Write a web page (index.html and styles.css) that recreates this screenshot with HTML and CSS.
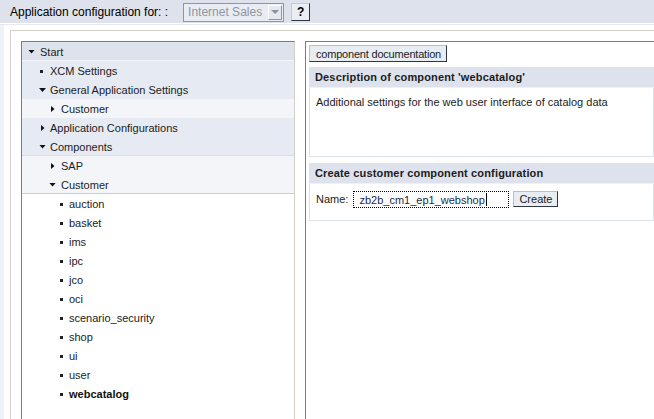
FILE: index.html
```html
<!DOCTYPE html>
<html>
<head>
<meta charset="utf-8">
<link rel="stylesheet" href="styles.css">
</head>
<body>
<div class="topbar">
  <span class="toplabel">Application configuration for: :</span>
  <div class="select">
    <span class="select-text">Internet Sales</span>
    <span class="select-arrow"><i class="arrow-gray"></i></span>
  </div>
  <span class="helpbtn">?</span>
</div>
<div class="topsep"></div>
<div class="workarea">
  <div class="frame">
    <div class="tree">
      <div class="row r0 sep-light"><span class="mk l0"><i class="tri-down"></i></span>Start</div>
      <div class="row r1"><span class="mk l1"><i class="dot"></i></span>XCM Settings</div>
      <div class="row r1"><span class="mk l1"><i class="tri-down"></i></span>General Application Settings</div>
      <div class="row r2"><span class="mk l2"><i class="tri-right"></i></span>Customer</div>
      <div class="row r1"><span class="mk l1"><i class="tri-right"></i></span>Application Configurations</div>
      <div class="row r1 sep-mid"><span class="mk l1"><i class="tri-down"></i></span>Components</div>
      <div class="row r2"><span class="mk l2"><i class="tri-right"></i></span>SAP</div>
      <div class="row r2 sep-dark"><span class="mk l2"><i class="tri-down"></i></span>Customer</div>
      <div class="row leaf"><span class="mk l3"><i class="dot"></i></span>auction</div>
      <div class="row leaf"><span class="mk l3"><i class="dot"></i></span>basket</div>
      <div class="row leaf"><span class="mk l3"><i class="dot"></i></span>ims</div>
      <div class="row leaf"><span class="mk l3"><i class="dot"></i></span>ipc</div>
      <div class="row leaf"><span class="mk l3"><i class="dot"></i></span>jco</div>
      <div class="row leaf"><span class="mk l3"><i class="dot"></i></span>oci</div>
      <div class="row leaf"><span class="mk l3"><i class="dot"></i></span>scenario_security</div>
      <div class="row leaf"><span class="mk l3"><i class="dot"></i></span>shop</div>
      <div class="row leaf"><span class="mk l3"><i class="dot"></i></span>ui</div>
      <div class="row leaf"><span class="mk l3"><i class="dot"></i></span>user</div>
      <div class="row leaf selected"><span class="mk l3"><i class="dot"></i></span>webcatalog</div>
    </div>
    <div class="detail">
      <div class="btnrow"><span class="btn doc">component documentation</span></div>
      <div class="section">
        <div class="sec-head">Description of component 'webcatalog'</div>
        <div class="sec-body desc">Additional settings for the web user interface of catalog data</div>
      </div>
      <div class="section">
        <div class="sec-head">Create customer component configuration</div>
        <div class="sec-body form">
          <span class="label">Name:</span>
          <div class="input"><span class="input-inner">zb2b_cm1_ep1_webshop<span class="caret"></span></span></div>
          <span class="btn create">Create</span>
        </div>
      </div>
    </div>
  </div>
</div>
</body>
</html>
```

FILE: styles.css
```css
html, body {
  margin: 0;
  padding: 0;
  background: #ffffff;
}
body {
  font-family: "Liberation Sans", Arial, sans-serif;
  font-size: 11px;
  color: #1c1c1c;
  height: 100vh;
  overflow: hidden;
  display: flex;
  flex-direction: column;
}
.topbar {
  height: 23px;
  flex: none;
  background: #dde2ec;
  display: flex;
  align-items: center;
  padding-left: 10px;
  box-sizing: border-box;
}
.toplabel {
  font-size: 12px;
  color: #000;
  margin-right: 15px;
}
.select {
  width: 101px;
  height: 19px;
  box-sizing: border-box;
  border: 1px solid #8f96a2;
  background: #e9edf3;
  display: flex;
  align-items: center;
  justify-content: space-between;
  padding: 0 1px 0 4px;
  margin-top: 1px;
}
.select-text {
  font-size: 12px;
  color: #8e95a3;
}
.select-arrow {
  width: 14px;
  height: 15px;
  box-sizing: border-box;
  background: #e4e8ef;
  border-top: 1px solid #ffffff;
  border-left: 1px solid #ffffff;
  border-right: 1px solid #8f96a2;
  border-bottom: 1px solid #8f96a2;
  display: flex;
  align-items: center;
  justify-content: center;
}
.arrow-gray {
  width: 8px;
  height: 4px;
  background: #8d929c;
  clip-path: polygon(0 0, 100% 0, 50% 100%);
}
.helpbtn {
  margin-left: 7px;
  width: 19px;
  height: 18px;
  box-sizing: border-box;
  border: 1px solid #c4cad4;
  border-right-color: #2e3440;
  border-bottom-color: #2e3440;
  background: #e9edf4;
  font-size: 12px;
  font-weight: bold;
  color: #000;
  display: flex;
  align-items: center;
  justify-content: center;
  margin-top: 1px;
}
.topsep {
  height: 1px;
  flex: none;
  margin-top: 1px;
  background: #e6eaf0;
}
.workarea {
  flex: 1;
  min-height: 0;
  border-left: 4px solid #eef1f7;
  padding: 5px 0 0 6px;
  display: flex;
}
.frame {
  flex: 1;
  border-left: 1px solid #d6d2c9;
  border-top: 1px solid #d6d2c9;
  padding: 10px 0 0 10px;
  display: flex;
  gap: 10px;
}
.tree {
  width: 274px;
  flex: none;
  box-sizing: border-box;
  border-left: 1px solid #7c7c7c;
  border-top: 1px solid #7c7c7c;
  border-right: 1px solid #d4d0c8;
}
.row {
  height: 19px;
  box-sizing: border-box;
  padding-top: 1px;
  display: flex;
  align-items: center;
  white-space: nowrap;
  color: #1c1c1c;
}
.r0 { background: #dde2ec; }
.r1 { background: #e6eaf2; }
.r2 { background: #f3f5f9; }
.leaf { background: #ffffff; }
.sep-light { border-bottom: 1px solid #f3f5f9; }
.sep-mid { border-bottom: 1px solid #d9dee7; }
.sep-dark { border-bottom: 1px solid #c9ced7; }
.selected { font-weight: bold; color: #111; }
.mk {
  display: inline-flex;
  align-items: center;
  justify-content: center;
  width: 7px;
  height: 7px;
  flex: none;
  margin-right: 5px;
}
.l0 { margin-left: 6px; }
.l1 { margin-left: 17px; margin-right: 4px; }
.l2 { margin-left: 27px; }
.l3 { margin-left: 38px; width: 3px; margin-right: 6px; }
.l1 .dot { margin-left: -2px; }
.tri-down {
  width: 7px;
  height: 4px;
  background: #111;
  clip-path: polygon(0 0, 100% 0, 50% 100%);
}
.tri-right {
  width: 4px;
  height: 7px;
  background: #111;
  clip-path: polygon(0 0, 100% 50%, 0 100%);
}
.dot {
  width: 3px;
  height: 3px;
  background: #222;
}
.detail {
  flex: 1;
  box-sizing: border-box;
  border-left: 1px solid #7c7c7c;
  border-top: 1px solid #7c7c7c;
  padding: 3px 0 0 3px;
  min-width: 0;
}
.btnrow {
  display: flex;
  margin-bottom: 5px;
}
.btn {
  height: 17px;
  box-sizing: border-box;
  padding: 0 5px 0 6px;
  background: #e8ecf3;
  border: 1px solid #b8bfca;
  border-right-color: #2f3542;
  border-bottom-color: #2f3542;
  color: #1c1c1c;
  display: inline-flex;
  align-items: center;
}
.doc {
  letter-spacing: -0.2px;
}
.section {
  margin-bottom: 6px;
}
.sec-head {
  height: 21px;
  background: #dde2ec;
  font-weight: bold;
  line-height: 20px;
  padding-left: 6px;
  color: #1c1c1c;
  letter-spacing: 0.15px;
  border-bottom: 1px solid #eef1f6;
  box-sizing: border-box;
}
.sec-body {
  border: 1px solid #dde2ec;
  border-top: none;
  background: #fff;
  padding-left: 6px;
}
.desc {
  height: 69px;
  box-sizing: border-box;
  padding-top: 7px;
  line-height: 14px;
}
.form {
  height: 37px;
  box-sizing: border-box;
  display: flex;
  align-items: flex-start;
  padding-top: 7px;
}
.label {
  line-height: 17px;
  margin-right: 5px;
}
.input {
  width: 156px;
  height: 17px;
  box-sizing: border-box;
  border: 1px dotted #000;
  background: #fff;
  padding-left: 5px;
  display: flex;
  align-items: center;
}
.input-inner {
  color: #1a2a4a;
  display: inline-flex;
  align-items: center;
}
.caret {
  display: inline-block;
  width: 1px;
  height: 13px;
  background: #000;
  margin-left: 1px;
}
.create {
  margin-left: 4px;
  padding: 0 5px;
  height: 16px;
}
```
